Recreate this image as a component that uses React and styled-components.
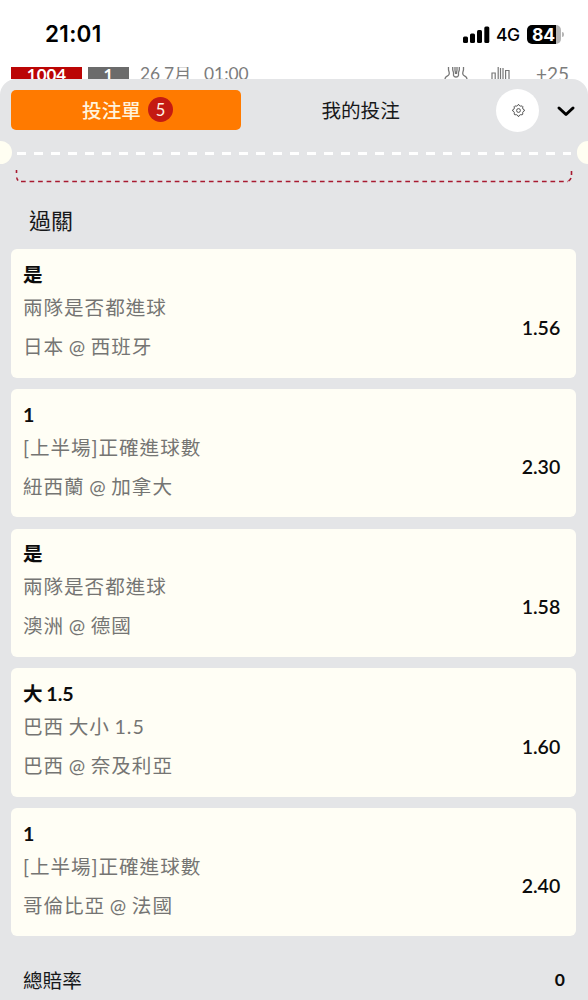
import React from "react";
import styled, { createGlobalStyle } from "styled-components";

const Global = createGlobalStyle`
  * { box-sizing: border-box; }
  body { margin: 0; background: #fff; overflow: hidden; }
`;

const Screen = styled.div`
  width: 588px;
  height: 1000px;
  overflow: hidden;
  display: flex;
  flex-direction: column;
  background: #fff;
  color: #17181a;
  font-family: Lato, "Noto Sans CJK TC", sans-serif;
  font-size: 19.6px;
  white-space: nowrap;
`;

const StatusBar = styled.header`
  height: 67px;
  flex: none;
  display: flex;
  justify-content: space-between;
  align-items: flex-start;
  padding: 20px 24px 0 45px;
  font-family: Inter, sans-serif;
  color: #000;
`;

const Clock = styled.div`
  font-size: 22.5px;
  line-height: 28px;
  font-weight: 600;
  letter-spacing: 0.3px;
`;

const StatusIcons = styled.div`
  display: flex;
  align-items: center;
  height: 28px;
`;

const Network = styled.span`
  margin-left: 6px;
  width: 31px;
  font-size: 17.5px;
  font-weight: 500;
  letter-spacing: -0.5px;
`;

const Battery = styled.div`
  width: 34px;
  height: 19px;
  border-radius: 5px;
  background: linear-gradient(90deg, #000 29px, #b5b5b5 29px);
  color: #fff;
  font-size: 17.5px;
  font-weight: 700;
  line-height: 19px;
  padding-left: 5px;
  letter-spacing: -0.2px;
`;

const BatteryCap = styled.div`
  width: 2px;
  height: 5px;
  margin-left: 1px;
  border-radius: 0 2px 2px 0;
  background: #b5b5b5;
`;

const MatchRow = styled.div`
  height: 12px;
  flex: none;
  overflow: hidden;
  display: flex;
  align-items: flex-start;
  padding: 0 19px 0 11px;
  color: #7c7c7c;
  font-size: 17.4px;
  line-height: 16px;
`;

const Tag = styled.span`
  width: ${(p) => p.$width}px;
  height: 16px;
  margin-right: 6px;
  background: ${(p) => p.$color};
  color: #fff;
  font-size: 17px;
  font-weight: 700;
  line-height: 16px;
  text-align: center;
`;

const MatchDate = styled.span`
  margin-left: 5px;
  width: 64px;
  line-height: 13px;
  letter-spacing: -0.2px;
`;

const MatchTime = styled.span`
  flex: 1;
  line-height: 13px;
`;

const MatchIcons = styled.div`
  display: flex;
  gap: 23px;
  margin-right: 26px;
`;

const MoreMarkets = styled.span`
  font-size: 19px;
  line-height: 14px;
`;

const Sheet = styled.main`
  flex: 1;
  min-height: 0;
  background: #e4e5e7;
  border-radius: 16px 16px 0 0;
`;

const TabBar = styled.nav`
  display: flex;
  align-items: center;
  height: 62px;
  padding: 0 12px 0 11.3px;
`;

const Tab = styled.div`
  display: flex;
  align-items: center;
  justify-content: center;
  width: ${(p) => (p.$active ? 230 : 239)}px;
  height: 40px;
  padding-bottom: 1px;
  padding-left: ${(p) => (p.$active ? 3 : 0)}px;
  border-radius: 5px;
  background: ${(p) => (p.$active ? "#ff7a00" : "transparent")};
  color: ${(p) => (p.$active ? "#fff3dc" : "#17181a")};
  font-weight: ${(p) => (p.$active ? 500 : 400)};
`;

const Count = styled.span`
  width: 25.5px;
  height: 25.5px;
  margin-left: 7px;
  border-radius: 50%;
  background: #c41a12;
  color: #fff3e6;
  font-size: 16.5px;
  font-weight: 400;
  line-height: 26px;
  text-align: center;
`;

const SettingsButton = styled.div`
  display: flex;
  align-items: center;
  justify-content: center;
  width: 43px;
  height: 43px;
  margin-left: 16px;
  padding-left: 1px;
  border-radius: 50%;
  background: #fff;
`;

const Collapse = styled.svg`
  margin: 1px 0 0 17px;
`;

const TearLine = styled.div`
  display: flex;
  align-items: center;
  justify-content: space-between;
  height: 23px;
`;

const Notch = styled.div`
  width: 11.5px;
  height: 23px;
  background: #fffef2;
  border-radius: ${(p) => (p.$side === "left" ? "0 12px 12px 0" : "12px 0 0 12px")};
`;

const Dashes = styled.div`
  width: 554.5px;
  height: 3px;
  margin-top: 2px;
  background: repeating-linear-gradient(90deg, #fff 0 9px, transparent 9px 17.06px);
`;

const NoticeEdge = styled.svg`
  display: block;
  margin: 5px 0 0 15px;
`;

const SectionTitle = styled.h2`
  margin: 21px 0 0 29px;
  height: 45.3px;
  font-size: 22px;
  font-weight: 400;
  line-height: 34px;
`;

const Slips = styled.div`
  display: flex;
  flex-direction: column;
  gap: 11.3px;
  padding: 0 11.8px 0 11.3px;
`;

const Card = styled.article`
  height: 128.4px;
  padding: 12.8px 16px 0 11.7px;
  border-radius: 6px;
  background: #fffef5;
`;

const Pick = styled.div`
  height: 26px;
  line-height: 26px;
  font-weight: 700;
  word-spacing: -1px;
  color: #0c0c0c;
`;

const CardBody = styled.div`
  display: flex;
  align-items: center;
  justify-content: space-between;
`;

const Detail = styled.div`
  height: 39px;
  line-height: 39px;
  font-weight: 400;
  letter-spacing: 0.95px;
  word-spacing: -1.3px;
  color: #757573;
`;

const Odds = styled.div`
  font-size: 19.5px;
  font-weight: 600;
  color: #0c0c0c;
`;

const Total = styled.footer`
  display: flex;
  align-items: center;
  justify-content: space-between;
  height: 40px;
  margin-top: 23px;
  padding: 0 23px;
`;

const TotalValue = styled.span`
  font-size: 17.5px;
  font-weight: 700;
  color: #0c0c0c;
`;

const bets = [
  { pick: "是", market: "兩隊是否都進球", match: "日本 @ 西班牙", odds: "1.56" },
  { pick: "1", market: "[上半場]正確進球數", match: "紐西蘭 @ 加拿大", odds: "2.30" },
  { pick: "是", market: "兩隊是否都進球", match: "澳洲 @ 德國", odds: "1.58" },
  { pick: "大 1.5", market: "巴西 大小 1.5", match: "巴西 @ 奈及利亞", odds: "1.60" },
  { pick: "1", market: "[上半場]正確進球數", match: "哥倫比亞 @ 法國", odds: "2.40" },
];

const Signal = () => (
  <svg width="27" height="17" viewBox="0 0 27 17">
    <rect x="0" y="10.5" width="5" height="6.5" rx="1.5" />
    <rect x="7" y="7.5" width="5" height="9.5" rx="1.5" />
    <rect x="14" y="4" width="5" height="13" rx="1.5" />
    <rect x="21.3" y="0.5" width="5" height="16.5" rx="1.5" />
  </svg>
);

const Lineups = () => (
  <svg width="24" height="14" fill="none" stroke="#777" strokeWidth="1.3">
    <path d="M4.500 0V2.500C4.500 4.500 6 5.500 5 7.500C4 9.500 1 9 1 12M8.700 0V2.500C8.700 4.500 10 5 9.500 7C9 9.500 11 10 12 10C13 10 15 9.500 14.500 7C14 5 15.300 4.500 15.300 2.500V0M11 0V3C11 4.500 11.600 5 11.600 7M13 0V3C13 4.500 12.400 5 12.400 7M19.500 0V2.500C19.500 4.500 18 5.500 19 7.500C20 9.500 23 9 23 12" />
  </svg>
);

const Stats = () => (
  <svg width="19" height="14" fill="none" stroke="#777" strokeWidth="1.2">
    <path d="M1 14V6h3.200v8M7.200 14V0M9.500 14V1M12 14V1M14.600 14V3.500h3.400v10.500" />
  </svg>
);

const Gear = () => (
  <svg width="13" height="13" viewBox="0 0 13 13" fill="none" stroke="#444" strokeWidth="0.9">
    <path d="M5.300 1.800 6 .7h1l.7 1.100 1.100.4 1.300-.3.8.8-.3 1.300.5 1.200 1.200.6v1.200l-1.200.7-.5 1.100.3 1.300-.8.8-1.300-.3-1.100.5-.7 1.200H6l-.7-1.200-1.100-.5-1.300.3-.8-.8.3-1.300-.5-1.100L.7 7V5.800l1.200-.6.5-1.200-.3-1.300.8-.8 1.300.3z" />
    <circle cx="6.500" cy="6.500" r="1.900" />
  </svg>
);

export default function App() {
  return (
    <Screen>
      <Global />
      <StatusBar>
        <Clock>21:01</Clock>
        <StatusIcons>
          <Signal />
          <Network>4G</Network>
          <Battery>84</Battery>
          <BatteryCap />
        </StatusIcons>
      </StatusBar>
      <MatchRow>
        <Tag $width={71} $color="#bb0505">1004</Tag>
        <Tag $width={41} $color="#6b6b6b">1</Tag>
        <MatchDate>26 7月</MatchDate>
        <MatchTime>01:00</MatchTime>
        <MatchIcons>
          <Lineups />
          <Stats />
        </MatchIcons>
        <MoreMarkets>+25</MoreMarkets>
      </MatchRow>
      <Sheet>
        <TabBar>
          <Tab $active>
            投注單<Count>5</Count>
          </Tab>
          <Tab>我的投注</Tab>
          <SettingsButton>
            <Gear />
          </SettingsButton>
          <Collapse width="20" height="14" fill="none" stroke="#000" strokeWidth="3" strokeLinecap="round" strokeLinejoin="round">
            <path d="M3 4l7 6.500L17 4" />
          </Collapse>
        </TabBar>
        <TearLine>
          <Notch $side="left" />
          <Dashes />
          <Notch $side="right" />
        </TearLine>
        <NoticeEdge width="558" height="14" fill="none" stroke="#a81a30" strokeWidth="1.600">
          <path d="M1.500 1v3M1.700 8.500q.3 2 1.500 3M556.500 2v4M556 9q-.7 2-2.500 3" />
          <path d="M6 12.500H553" strokeDasharray="4.700 3.840" />
        </NoticeEdge>
        <SectionTitle>過關</SectionTitle>
        <Slips>
          {bets.map((bet) => (
            <Card key={bet.match}>
              <Pick>{bet.pick}</Pick>
              <CardBody>
                <div>
                  <Detail>{bet.market}</Detail>
                  <Detail>{bet.match}</Detail>
                </div>
                <Odds>{bet.odds}</Odds>
              </CardBody>
            </Card>
          ))}
        </Slips>
        <Total>
          總賠率<TotalValue>0</TotalValue>
        </Total>
      </Sheet>
    </Screen>
  );
}
